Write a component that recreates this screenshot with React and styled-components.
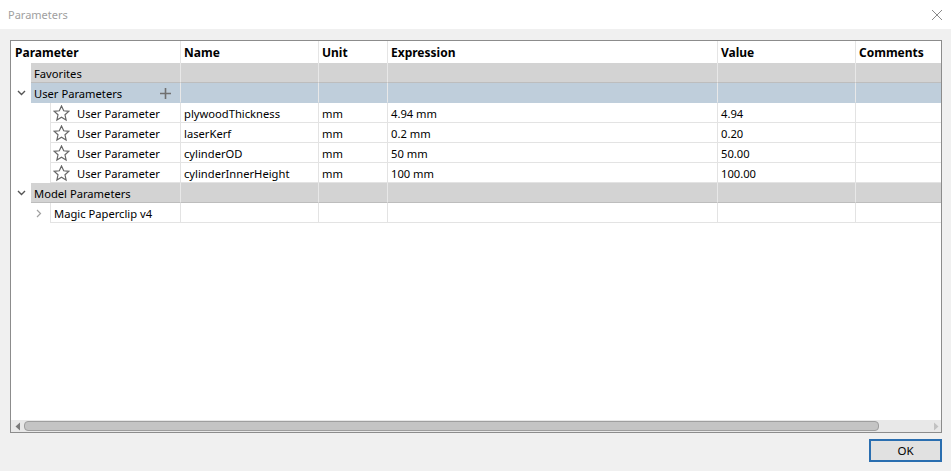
import React from 'react';
import styled, { createGlobalStyle } from 'styled-components';

const GlobalStyle = createGlobalStyle`
    html, body {
        margin: 0;
        padding: 0;
        background: #f0f0f0;
    }
    body {
        font-family: "Noto Sans", "Open Sans", Arial, sans-serif;
        font-size: 11.2px;
        color: #000;
    }
`

const COLS = '170px 138px 69px 330px 138px 1fr';

const Dialog = styled.div`
    width: 951px;
    height: 471px;
    display: flex;
    flex-direction: column;
    background: #f0f0f0;
`

const TitleBar = styled.div`
    height: 29px;
    background: #fff;
    display: flex;
    align-items: center;
    justify-content: space-between;
    padding: 0 8px;
    box-sizing: border-box;
    color: #a0a0a0;
    font-size: 11px;
`

const Body = styled.div`
    flex: 1;
    display: flex;
    flex-direction: column;
    padding: 11px 9px 9px 10px;
    gap: 6px;
`

const TableBox = styled.div`
    flex: 1;
    display: flex;
    flex-direction: column;
    border: 1px solid #8c8c8c;
    background: #fff;
`

const HeaderRow = styled.div`
    display: grid;
    grid-template-columns: ${COLS};
    height: 22px;
`

const HeaderCell = styled.div`
    display: flex;
    align-items: center;
    padding-left: ${p => p.$pad || 3}px;
    font-weight: 700;
    font-size: 12px;
    border-right: 1px solid #e5e5e5;
    &:last-child { border-right: none; }
`

const Rows = styled.div`
    flex: 1;
`

const Row = styled.div`
    display: grid;
    grid-template-columns: ${COLS};
    height: 20px;
`

const bg = {
    gray: '#d3d3d3',
    blue: '#bfcedb',
    white: '#fff',
};

const line = {
    gray: '#bdbdbd',
    blue: '#bfcedb',
    white: '#e3e3e3',
};

const Cell = styled.div`
    display: flex;
    align-items: center;
    padding: 1px 0 0 3px;
    background: ${p => bg[p.$tone]};
    border-right: 1px solid ${p => (p.$tone === 'white' ? '#e3e3e3' : '#e8e8e8')};
    border-bottom: 1px solid ${p => line[p.$tone]};
    box-sizing: border-box;
    white-space: nowrap;
    overflow: hidden;
    &:last-child { border-right: none; }
`

const TreeCell = styled.div`
    display: flex;
    height: 20px;
`

const Gutter = styled.div`
    width: ${p => p.$w}px;
    flex: none;
    display: flex;
    align-items: center;
    justify-content: ${p => p.$justify || 'center'};
    padding-right: ${p => p.$pr || 0}px;
    box-sizing: border-box;
`

const Label = styled.div`
    flex: 1;
    display: flex;
    align-items: center;
    gap: 7px;
    padding: 1px 9px 0 ${p => p.$pad || 3}px;
    background: ${p => bg[p.$tone]};
    border-bottom: 1px solid ${p => line[p.$tone]};
    border-left: ${p => (p.$edge ? '1px solid #e3e3e3' : 'none')};
    border-right: 1px solid ${p => (p.$tone === 'white' ? '#e3e3e3' : '#e8e8e8')};
    box-sizing: border-box;
    white-space: nowrap;
`

const Grow = styled.span`
    flex: 1;
`

const ScrollBar = styled.div`
    height: 12px;
    display: flex;
    align-items: center;
    background: #e8e8e8;
    padding: 0 2px 0 4px;
    gap: 3px;
`

const Thumb = styled.div`
    width: 853px;
    height: 8px;
    background: #c4c4c4;
    border: 1px solid #9e9e9e;
    border-radius: 4px;
`

const Footer = styled.div`
    display: flex;
    justify-content: flex-end;
`

const OkButton = styled.button`
    width: 73px;
    height: 23px;
    border: 2px solid #2a6eb0;
    background: #e1e1e1;
    font-family: "Noto Sans", "Open Sans", Arial, sans-serif;
    font-size: 11.5px;
    color: #000;
    padding: 0;
`

const CloseX = () => (
    <svg width="12" height="12" viewBox="0 0 12 12">
        <path d="M1 1L11 11M11 1L1 11" stroke="#8a8a8a" strokeWidth="1" />
    </svg>
)

const ChevronDown = () => (
    <svg width="9" height="6" viewBox="0 0 9 6">
        <path d="M1 1L4.5 4.5L8 1" stroke="#555" strokeWidth="1.4" fill="none" />
    </svg>
)

const ChevronRight = () => (
    <svg width="6" height="9" viewBox="0 0 6 9">
        <path d="M1 1L4.5 4.5L1 8" stroke="#a0a0a0" strokeWidth="1.2" fill="none" />
    </svg>
)

const Plus = () => (
    <svg width="11" height="11" viewBox="0 0 11 11">
        <path d="M5.5 0V11M0 5.5H11" stroke="#707070" strokeWidth="1.6" />
    </svg>
)

const Star = () => (
    <svg width="17" height="17" viewBox="0 0 17 17">
        <path
            d="M8.5 1L10.7 5.8L15.9 6.3L12 9.8L13.1 15L8.5 12.3L3.9 15L5 9.8L1.1 6.3L6.3 5.8Z"
            stroke="#666"
            strokeWidth="1.2"
            fill="none"
        />
    </svg>
)

const ArrowLeft = () => (
    <svg width="6" height="9" viewBox="0 0 6 9">
        <path d="M5 0.5V8.5L0.5 4.5Z" fill="#7a7a7a" />
    </svg>
)

const ArrowRight = () => (
    <svg width="6" height="9" viewBox="0 0 6 9">
        <path d="M1 0.5V8.5L5.5 4.5Z" fill="#c2c2c2" />
    </svg>
)

const headers = [
    { title: 'Parameter', pad: 4 },
    { title: 'Name' },
    { title: 'Unit' },
    { title: 'Expression' },
    { title: 'Value' },
    { title: 'Comments' },
];

const params = [
    { name: 'plywoodThickness', unit: 'mm', expr: '4.94 mm', value: '4.94' },
    { name: 'laserKerf', unit: 'mm', expr: '0.2 mm', value: '0.20' },
    { name: 'cylinderOD', unit: 'mm', expr: '50 mm', value: '50.00' },
    { name: 'cylinderInnerHeight', unit: 'mm', expr: '100 mm', value: '100.00' },
];

const EmptyCells = ({ tone }) => (
    <>
        {[0, 1, 2, 3, 4].map(i => <Cell key={i} $tone={tone} />)}
    </>
)

const GroupRow = ({ label, tone, open, action }) => (
    <Row>
        <TreeCell>
            <Gutter $w={20}>{open && <ChevronDown />}</Gutter>
            <Label $tone={tone}>
                {label}
                <Grow />
                {action}
            </Label>
        </TreeCell>
        <EmptyCells tone={tone} />
    </Row>
)

const App = () => {
    return (
        <Dialog>
            <GlobalStyle />
            <TitleBar>
                <span>Parameters</span>
                <CloseX />
            </TitleBar>
            <Body>
                <TableBox>
                    <HeaderRow>
                        {headers.map(h => (
                            <HeaderCell key={h.title} $pad={h.pad}>{h.title}</HeaderCell>
                        ))}
                    </HeaderRow>
                    <Rows>
                        <GroupRow label="Favorites" tone="gray" />
                        <GroupRow label="User Parameters" tone="blue" open action={<Plus />} />
                        {params.map(p => (
                            <Row key={p.name}>
                                <TreeCell>
                                    <Gutter $w={39} />
                                    <Label $tone="white" $edge $pad={2}>
                                        <Star />
                                        User Parameter
                                    </Label>
                                </TreeCell>
                                <Cell $tone="white">{p.name}</Cell>
                                <Cell $tone="white">{p.unit}</Cell>
                                <Cell $tone="white">{p.expr}</Cell>
                                <Cell $tone="white">{p.value}</Cell>
                                <Cell $tone="white" />
                            </Row>
                        ))}
                        <GroupRow label="Model Parameters" tone="gray" open />
                        <Row>
                            <TreeCell>
                                <Gutter $w={39} $justify="flex-end" $pr={8}>
                                    <ChevronRight />
                                </Gutter>
                                <Label $tone="white" $edge>Magic Paperclip v4</Label>
                            </TreeCell>
                            <EmptyCells tone="white" />
                        </Row>
                    </Rows>
                    <ScrollBar>
                        <ArrowLeft />
                        <Thumb />
                        <Grow />
                        <ArrowRight />
                    </ScrollBar>
                </TableBox>
                <Footer>
                    <OkButton>OK</OkButton>
                </Footer>
            </Body>
        </Dialog>
    )
}

export default App;
